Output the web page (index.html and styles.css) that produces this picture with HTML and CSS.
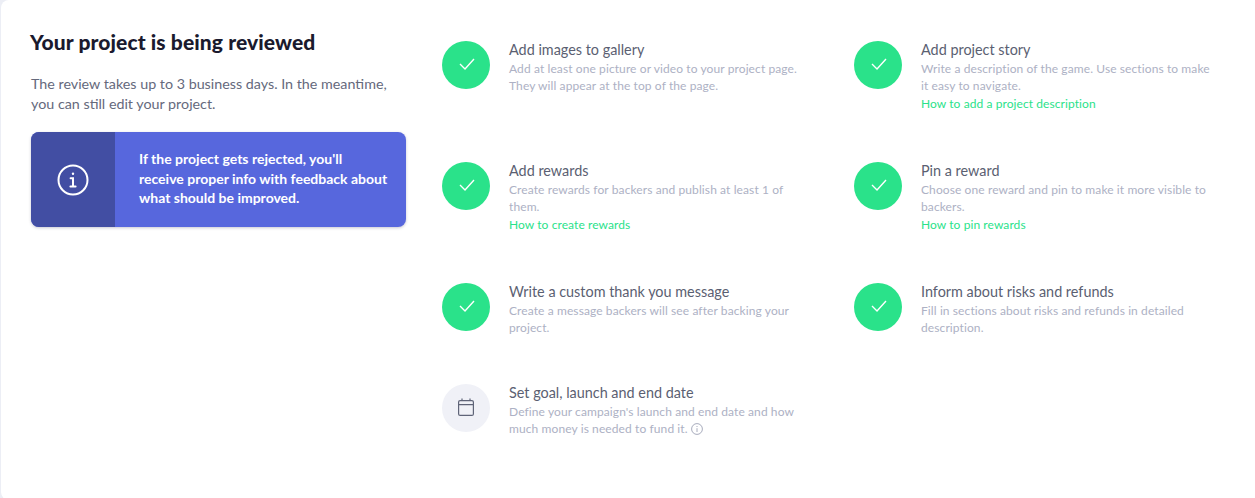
FILE: index.html
```html
<!DOCTYPE html>
<html lang="en">
<head>
    <meta charset="UTF-8">
    <meta name="viewport" content="width=device-width, initial-scale=1.0">
    <title>Project review</title>
    <link rel="stylesheet" href="styles.css">
</head>
<body>
    <div class="panel">
        <div class="intro">
            <h2>Your project is being reviewed</h2>
            <p class="intro-text">The review takes up to 3 business days. In the meantime, you can still edit your project.</p>
            <div class="notice">
                <div class="notice-icon">
                    <svg width="32" height="32" viewBox="0 0 32 32" fill="none" stroke="#fff" stroke-width="2" stroke-linecap="round">
                        <circle cx="16" cy="16" r="14.5"/>
                        <circle cx="16" cy="9.8" r="1.2" fill="#fff" stroke="none"/>
                        <path d="M13.6 14.2H16V22.4M13.4 22.6H18.6"/>
                    </svg>
                </div>
                <p class="notice-text">If the project gets rejected, you'll<br>receive proper info with feedback about what should be improved.</p>
            </div>
        </div>

        <div class="steps">
            <div class="step">
                <div class="step-icon done">
                    <svg width="16" height="12" viewBox="0 0 16 12" fill="none" stroke="#fff" stroke-width="1.4"><path d="M1 6l5 5L15 1"/></svg>
                </div>
                <div>
                    <h3>Add images to gallery</h3>
                    <p>Add at least one picture or video to your project page. They will appear at the top of the page.</p>
                </div>
            </div>
            <div class="step">
                <div class="step-icon done">
                    <svg width="16" height="12" viewBox="0 0 16 12" fill="none" stroke="#fff" stroke-width="1.4"><path d="M1 6l5 5L15 1"/></svg>
                </div>
                <div>
                    <h3>Add project story</h3>
                    <p>Write a description of the game. Use sections to make it easy to navigate.</p>
                    <a href="#">How to add a project description</a>
                </div>
            </div>
            <div class="step">
                <div class="step-icon done">
                    <svg width="16" height="12" viewBox="0 0 16 12" fill="none" stroke="#fff" stroke-width="1.4"><path d="M1 6l5 5L15 1"/></svg>
                </div>
                <div>
                    <h3>Add rewards</h3>
                    <p>Create rewards for backers and publish at least 1 of them.</p>
                    <a href="#">How to create rewards</a>
                </div>
            </div>
            <div class="step">
                <div class="step-icon done">
                    <svg width="16" height="12" viewBox="0 0 16 12" fill="none" stroke="#fff" stroke-width="1.4"><path d="M1 6l5 5L15 1"/></svg>
                </div>
                <div>
                    <h3>Pin a reward</h3>
                    <p>Choose one reward and pin to make it more visible to backers.</p>
                    <a href="#">How to pin rewards</a>
                </div>
            </div>
            <div class="step">
                <div class="step-icon done">
                    <svg width="16" height="12" viewBox="0 0 16 12" fill="none" stroke="#fff" stroke-width="1.4"><path d="M1 6l5 5L15 1"/></svg>
                </div>
                <div>
                    <h3>Write a custom thank you message</h3>
                    <p>Create a message backers will see after backing your project.</p>
                </div>
            </div>
            <div class="step">
                <div class="step-icon done">
                    <svg width="16" height="12" viewBox="0 0 16 12" fill="none" stroke="#fff" stroke-width="1.4"><path d="M1 6l5 5L15 1"/></svg>
                </div>
                <div>
                    <h3>Inform about risks and refunds</h3>
                    <p>Fill in sections about risks and refunds in detailed description.</p>
                </div>
            </div>
            <div class="step">
                <div class="step-icon todo">
                    <svg width="16" height="18" viewBox="0 0 16 18" fill="none" stroke="#5f6478" stroke-width="1.2"><rect x="0.6" y="2.6" width="14.8" height="14.8" rx="1.5"/><path d="M0.6 6.6H15.4M4 0.4V3M12 0.4V3"/></svg>
                </div>
                <div>
                    <h3>Set goal, launch and end date</h3>
                    <p>Define your campaign's launch and end date and how much money is needed to fund it.
                        <svg class="hint" width="12" height="12" viewBox="0 0 12 12" fill="none" stroke="#9ea3b5" stroke-width="0.9"><circle cx="6" cy="6" r="5.4"/><path d="M6 5.2V9M6 3V4"/></svg>
                    </p>
                </div>
            </div>
        </div>
    </div>
</body>
</html>
```

FILE: styles.css
```css
html, body {
    height: 100%;
}

body {
    margin: 0;
    background-color: #eceef5;
    font-family: "Lato", "Open Sans", sans-serif;
    overflow: hidden;
}

.panel {
    display: flex;
    box-sizing: border-box;
    height: 500px;
    margin-left: 1px;
    padding: 28px 30px 0 30px;
    background-color: #fff;
    border-radius: 8px 0 0 8px;
}

.intro {
    flex: none;
    width: 375px;
    margin-right: 36px;
}

h2 {
    margin: 0 0 0 -1px;
    color: #1a1a2e;
    font-size: 21px;
    font-weight: 900;
    line-height: 28px;
    letter-spacing: 0.1px;
}

.intro-text {
    margin: 18px 0 18px;
    color: #65697c;
    font-size: 14.3px;
    line-height: 20px;
}

.notice {
    display: flex;
    height: 95px;
    overflow: hidden;
    background-color: #5767dd;
    border-radius: 8px;
    box-shadow: 0 1px 3px rgba(40, 40, 80, 0.25);
}

.notice-icon {
    display: flex;
    flex: none;
    justify-content: center;
    align-items: center;
    width: 84px;
    background-color: #424ea3;
}

.notice-text {
    margin: 0;
    padding: 17px 10px 0 24px;
    color: #fff;
    font-size: 14px;
    font-weight: 700;
    line-height: 19.5px;
}

.steps {
    display: grid;
    grid-template-columns: 412px 1fr;
    grid-auto-rows: auto;
    align-content: start;
    row-gap: 48px;
    margin-top: 13px;
}

.step {
    display: flex;
    gap: 19px;
    width: 357px;
}

.step-icon {
    display: flex;
    flex: none;
    justify-content: center;
    align-items: center;
    width: 48px;
    height: 48px;
    border-radius: 50%;
}

.step-icon svg {
    margin-bottom: 2px;
}

.step-icon.done {
    background-color: #2ae28a;
}

.step-icon.done svg {
    margin-left: 2px;
}

.step-icon.todo {
    background-color: #f0f1f7;
}

h3 {
    margin: 0 0 1px;
    color: #5b5f72;
    font-size: 14.4px;
    font-weight: 400;
    line-height: 18px;
}

.step p {
    margin: 0;
    color: #adb1c4;
    font-size: 12px;
    line-height: 17px;
    letter-spacing: 0.1px;
}

.step a {
    display: block;
    margin-bottom: 1px;
    color: #2ae28a;
    font-size: 12px;
    line-height: 19px;
    letter-spacing: 0.08px;
    text-decoration: none;
}

.hint {
    vertical-align: -2px;
}
```
